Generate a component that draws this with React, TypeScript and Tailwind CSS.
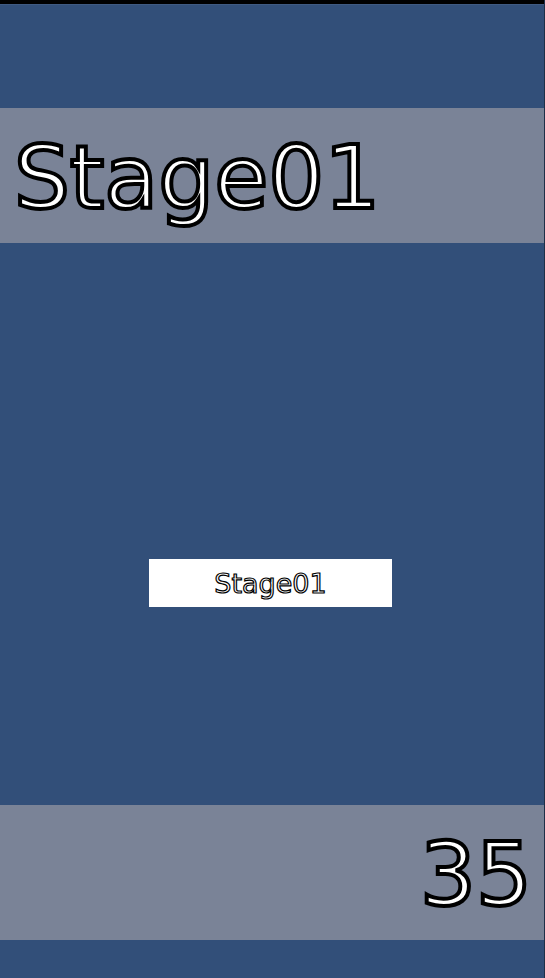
export default function App() {
  const outline =
    "[font-family:'DejaVu_Sans',sans-serif] text-white [-webkit-text-stroke:4px_black] leading-none";
  return (
    <div className="w-[545px] h-[978px] flex flex-col bg-[#324f79] border-r border-[#1e2f48] overflow-hidden">
      <div className="h-[4px] bg-black shrink-0" />
      <div className="h-[1px] bg-[#3f5a82] shrink-0" />
      <div className="h-[103px] shrink-0" />
      <div className="h-[135px] shrink-0 bg-[#7a8397] flex items-center pl-[14px]">
        <span className={`${outline} text-[88px] mt-[4px]`}>Stage01</span>
      </div>
      <div className="h-[562px] shrink-0 pt-[316px] pl-[149px]">
        <div className="w-[243px] h-[48px] bg-white flex items-center justify-center">
          <span className="[font-family:'DejaVu_Sans',sans-serif] text-white [-webkit-text-stroke:1.2px_black] text-[27px] leading-none">
            Stage01
          </span>
        </div>
      </div>
      <div className="h-[135px] shrink-0 bg-[#7a8397] flex items-center justify-end pr-[12px]">
        <span className={`${outline} text-[88px] mt-[4px]`}>35</span>
      </div>
      <div className="flex-1" />
    </div>
  );
}
